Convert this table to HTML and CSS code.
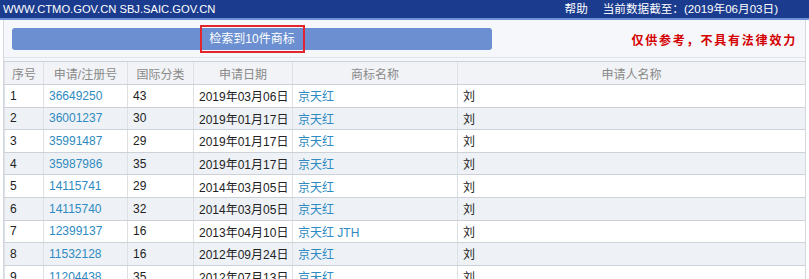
FILE: index.html
```html
<!DOCTYPE html>
<html lang="zh-CN">
<head>
<meta charset="utf-8">
<title>商标检索</title>
<link rel="stylesheet" href="styles.css">
</head>
<body>
<div class="topbar">
  <span class="site">WWW.CTMO.GOV.CN SBJ.SAIC.GOV.CN</span>
  <span class="info"><span class="help">帮助</span>当前数据截至：(2019年06月03日)</span>
</div>
<div class="main">
  <div class="toolbar">
    <div class="result">检索到10件商标<span class="mark"></span></div>
    <div class="notice">仅供参考，不具有法律效力</div>
  </div>
  <table class="list">
    <colgroup>
      <col class="c1"><col class="c2"><col class="c3"><col class="c4"><col class="c5"><col>
    </colgroup>
    <thead>
      <tr><th>序号</th><th>申请/注册号</th><th>国际分类</th><th>申请日期</th><th>商标名称</th><th>申请人名称</th></tr>
    </thead>
    <tbody>
      <tr><td>1</td><td><a href="#">36649250</a></td><td>43</td><td>2019年03月06日</td><td><a href="#">京天红</a></td><td>刘</td></tr>
      <tr><td>2</td><td><a href="#">36001237</a></td><td>30</td><td>2019年01月17日</td><td><a href="#">京天红</a></td><td>刘</td></tr>
      <tr><td>3</td><td><a href="#">35991487</a></td><td>29</td><td>2019年01月17日</td><td><a href="#">京天红</a></td><td>刘</td></tr>
      <tr><td>4</td><td><a href="#">35987986</a></td><td>35</td><td>2019年01月17日</td><td><a href="#">京天红</a></td><td>刘</td></tr>
      <tr><td>5</td><td><a href="#">14115741</a></td><td>29</td><td>2014年03月05日</td><td><a href="#">京天红</a></td><td>刘</td></tr>
      <tr><td>6</td><td><a href="#">14115740</a></td><td>32</td><td>2014年03月05日</td><td><a href="#">京天红</a></td><td>刘</td></tr>
      <tr><td>7</td><td><a href="#">12399137</a></td><td>16</td><td>2013年04月10日</td><td><a href="#">京天红 JTH</a></td><td>刘</td></tr>
      <tr><td>8</td><td><a href="#">11532128</a></td><td>16</td><td>2012年09月24日</td><td><a href="#">京天红</a></td><td>刘</td></tr>
      <tr><td>9</td><td><a href="#">11204438</a></td><td>35</td><td>2012年07月13日</td><td><a href="#">京天红</a></td><td>刘</td></tr>
    </tbody>
  </table>
</div>
</body>
</html>
```
FILE: styles.css
```css
html, body {
  margin: 0;
  padding: 0;
  background: #ffffff;
}
body {
  font-family: "Liberation Sans", "Noto Sans CJK SC", sans-serif;
  font-size: 12px;
  color: #222;
  overflow: hidden;
}
.topbar {
  height: 18px;
  background: #1b3c8e;
  border-bottom: 2px solid #6f93d6;
  color: #fff;
  display: flex;
  justify-content: space-between;
  align-items: center;
  padding: 0 31px 0 3px;
  line-height: 18px;
}
.site {
  font-size: 11.2px;
}
.info {
  font-size: 11.6px;
}
.help {
  margin-right: 15px;
}
.main {
  margin: 0 3px;
  border-left: 1px solid #d3d8df;
  border-right: 1px solid #d3d8df;
  background: #f5f7fa;
  min-height: 260px;
}
.toolbar {
  display: flex;
  justify-content: space-between;
  align-items: center;
  height: 37px;
  padding: 0 8px 0 8px;
  border-bottom: 1px solid #dfe4ea;
}
.result {
  position: relative;
  width: 480px;
  height: 22px;
  margin-top: 1px;
  background: #6b8fd1;
  border-radius: 3px;
  color: #fff;
  text-align: center;
  line-height: 22px;
  font-size: 12px;
}
.mark {
  position: absolute;
  left: 188px;
  top: -3px;
  width: 101px;
  height: 24px;
  border: 2.5px solid #e2262b;
}
.notice {
  color: #d40000;
  font-weight: bold;
  font-size: 12px;
  letter-spacing: 1.8px;
  margin-top: 2px;
}
.list {
  width: 100%;
  margin-top: 3px;
  border-collapse: collapse;
  table-layout: fixed;
  background: #fff;
}
.c1 { width: 39px; }
.c2 { width: 84px; }
.c3 { width: 66px; }
.c4 { width: 99px; }
.c5 { width: 165px; }
.list th {
  height: 22px;
  background: #f1f3f6;
  color: #8a8a8a;
  font-weight: normal;
  text-align: center;
  border-top: 1px solid #cdd2d9;
  border-bottom: 1px solid #cdd2d9;
  border-left: 1px solid #dde1e6;
  padding: 0;
}
.list td {
  height: 21.6px;
  padding: 0 0 0 5px;
  border-bottom: 1px solid #cdd2d9;
  border-left: 1px solid #dde1e6;
  white-space: nowrap;
  color: #222;
}
.list tbody tr:nth-child(even) td {
  background: #eef2f6;
}
.list a {
  color: #2e8ac0;
  text-decoration: none;
}
```
